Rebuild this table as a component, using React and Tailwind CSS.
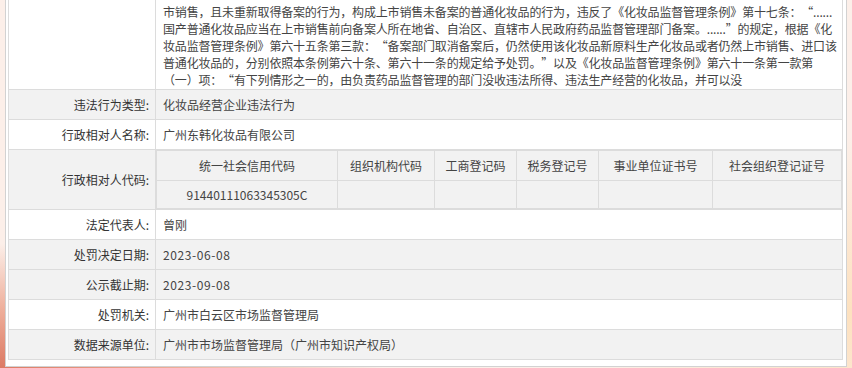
import React from "react";

const font = "font-['Microsoft_YaHei','Noto_Sans_CJK_SC',sans-serif]";

const basisLines = [
  "市销售，且未重新取得备案的行为，构成上市销售未备案的普通化妆品的行为，违反了《化妆品监督管理条例》第十七条：“......",
  "国产普通化妆品应当在上市销售前向备案人所在地省、自治区、直辖市人民政府药品监督管理部门备案。......”的规定，根据《化",
  "妆品监督管理条例》第六十五条第三款：“备案部门取消备案后，仍然使用该化妆品新原料生产化妆品或者仍然上市销售、进口该",
  "普通化妆品的，分别依照本条例第六十条、第六十一条的规定给予处罚。”以及《化妆品监督管理条例》第六十一条第一款第",
  "（一）项：“有下列情形之一的，由负责药品监督管理的部门没收违法所得、违法生产经营的化妆品，并可以没",
];

const codeColumns = [
  { name: "统一社会信用代码", value: "91440111063345305C", w: "w-[181px]" },
  { name: "组织机构代码", value: "", w: "w-[97px]" },
  { name: "工商登记码", value: "", w: "w-[82px]" },
  { name: "税务登记号", value: "", w: "w-[82px]" },
  { name: "事业单位证书号", value: "", w: "w-[114px]" },
  { name: "社会组织登记证号", value: "", w: "flex-1" },
];

function Row({ label, gray, children }) {
  return (
    <div
      className={`flex h-[30px] border-b border-[#dcdcdc] ${gray ? "bg-[#f2f2f2]" : "bg-white"}`}
    >
      <div className="flex w-[147px] shrink-0 items-center justify-end border-r border-[#dcdcdc] pr-[6px] text-[#333]">
        {label}
      </div>
      <div className="flex flex-1 items-center pl-[7px] text-[#444]">{children}</div>
    </div>
  );
}

function CodeTable() {
  return (
    <div className="flex h-full flex-1 flex-col border-b border-[#dcdcdc] bg-[#f2f2f2]">
      <div className="flex h-[30px] border border-b-0 border-[#dcdcdc]">
        {codeColumns.map((c, i) => (
          <div
            key={c.name}
            className={`flex items-center justify-center ${c.w} ${
              i < codeColumns.length - 1 ? "border-r border-[#dcdcdc]" : ""
            } text-[#444]`}
          >
            {c.name}
          </div>
        ))}
      </div>
      <div className="flex h-[29px] border border-[#dcdcdc]">
        {codeColumns.map((c, i) => (
          <div
            key={c.name}
            className={`flex items-center justify-center ${c.w} ${
              i < codeColumns.length - 1 ? "border-r border-[#dcdcdc]" : ""
            } text-[#444]`}
          >
            {c.value}
          </div>
        ))}
      </div>
    </div>
  );
}

export default function App() {
  return (
    <div
      className={`h-[368px] w-[852px] overflow-hidden px-[5px] text-[12px] [text-spacing-trim:space-all] ${font} bg-[#fcefe9] bg-[radial-gradient(ellipse_60%_45%_at_0%_100%,#dc7a64_0%,#eeae9a_35%,transparent_75%),radial-gradient(ellipse_40%_60%_at_100%_85%,#fde1bf_0%,transparent_80%)]`}
    >
      <div className="border-x border-b border-[#d2d2d2] bg-white pb-[6px] pl-[2px] pr-[3px]">
        <div className="border-x border-[#dcdcdc]">
          {/* penalty basis, wrapped as on the source page */}
          <div className="flex border-b border-[#dcdcdc] bg-white">
            <div className="w-[147px] shrink-0 border-r border-[#dcdcdc]" />
            <div className="flex-1 pb-[1px] pl-[7px] pt-[3px] leading-[17px] tracking-[-0.18px] text-[#444]">
              {basisLines.map((line) => (
                <div key={line} className="whitespace-nowrap">
                  {line}
                </div>
              ))}
            </div>
          </div>

          <Row label="违法行为类型:" gray>
            化妆品经营企业违法行为
          </Row>
          <Row label="行政相对人名称:">广州东韩化妆品有限公司</Row>

          <div className="flex h-[60px] bg-[#f2f2f2]">
            <div className="flex w-[147px] shrink-0 items-center justify-end border-b border-r border-[#dcdcdc] pr-[6px] text-[#333]">
              行政相对人代码:
            </div>
            <CodeTable />
          </div>

          <Row label="法定代表人:">曾刚</Row>
          <Row label="处罚决定日期:" gray>
            <span className="tracking-[0.6px]">2023-06-08</span>
          </Row>
          <Row label="公示截止期:" gray>
            <span className="tracking-[0.6px]">2023-09-08</span>
          </Row>
          <Row label="处罚机关:">广州市白云区市场监督管理局</Row>
          <Row label="数据来源单位:" gray>
            广州市市场监督管理局（广州市知识产权局）
          </Row>
        </div>
      </div>
    </div>
  );
}
